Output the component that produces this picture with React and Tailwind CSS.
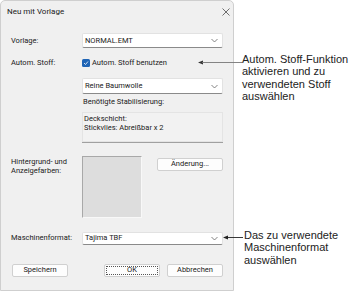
import React from "react";

const Chevron = () => (
  <svg width="7" height="5" viewBox="0 0 7 5" className="shrink-0">
    <path d="M0.5 1 L3.5 4 L6.5 1" fill="none" stroke="#666" strokeWidth="0.8" />
  </svg>
);

const Select = ({ text, h = "h-[15px]" }) => (
  <div className={`flex ${h} w-[141px] items-center justify-between rounded-[2px] border border-[#e2e2e2] border-b-[#8a8a8a] bg-white pl-[2px] pr-[4px]`}>
    <span>{text}</span>
    <Chevron />
  </div>
);

const Btn = ({ children, className = "" }) => (
  <div className={`flex h-[13px] w-[56px] items-center justify-center rounded-[2px] border border-[#d0d0d0] bg-[#fdfdfd] ${className}`}>
    {children}
  </div>
);

export default function App() {
  return (
    <div className="relative flex h-[294px] w-[355px] bg-white" style={{ fontFamily: "Roboto, 'Noto Sans', sans-serif" }}>
      <div className="flex h-[291px] w-[234px] flex-col rounded-t-[5px] border border-[#cfcfcf] bg-[#f0f0f0] text-[7.5px] leading-none text-[#1a1a1a]">
        <div className="flex h-[22px] items-center justify-between pl-[6px] pr-[3px] text-[8px]">
          <span>Neu mit Vorlage</span>
          <svg width="8" height="8" viewBox="0 0 8 8">
            <path d="M0.5 0.5 L7.5 7.5 M7.5 0.5 L0.5 7.5" stroke="#333" strokeWidth="0.7" />
          </svg>
        </div>
        <div className="flex flex-col pl-[10px]">
          <div className="mt-[10px] flex items-center">
            <span className="w-[71px]">Vorlage:</span>
            <Select text="NORMAL.EMT" />
          </div>
          <div className="mt-[10px] flex h-[10px] items-center">
            <span className="w-[71px]">Autom. Stoff:</span>
            <div className="flex items-center gap-[2px]">
              <div className="flex h-[8px] w-[8px] items-center justify-center rounded-[1.5px] bg-[#1f64b5]">
                <svg width="6" height="6" viewBox="0 0 6 6">
                  <path d="M1 3 L2.5 4.5 L5 1.5" fill="none" stroke="white" strokeWidth="0.8" />
                </svg>
              </div>
              <span>Autom. Stoff benutzen</span>
            </div>
          </div>
          <div className="ml-[71px] mt-[10px]">
            <Select text="Reine Baumwolle" h="h-[16px]" />
          </div>
          <div className="ml-[72px] mt-[4px]">Benötigte Stabilisierung:</div>
          <div className="ml-[71px] mt-[6px] flex h-[31px] w-[141px] flex-col gap-[2px] border-b border-[#a0a0a0] bg-[#f2f2f2] pl-[2px] pt-[3px] shadow-[inset_0_0_0_1px_#e4e4e4]">
            <span>Deckschicht:</span>
            <span>Stickvlies: Abreißbar x 2</span>
          </div>
          <div className="mt-[13px] flex">
            <div className="flex w-[71px] flex-col gap-[2px] pt-[2px]">
              <span>Hintergrund- und</span>
              <span>Anzeigefarben:</span>
            </div>
            <div className="h-[62px] w-[60px] border border-[#a8a8a8] border-b-[#f8f8f8] border-r-[#f8f8f8] bg-[#dddddd]"></div>
            <div className="ml-[15px] mt-[2px] flex h-[13px] w-[66px] items-center justify-center rounded-[2px] border border-[#d0d0d0] bg-[#fdfdfd]">
              Änderung...
            </div>
          </div>
          <div className="mt-[14px] flex items-center">
            <span className="w-[71px]">Maschinenformat:</span>
            <Select text="Tajima TBF" h="h-[13px]" />
          </div>
          <div className="mt-[19px] flex items-center">
            <Btn className="ml-[1px]">Speichern</Btn>
            <Btn className="ml-[36px] border-[#2a2a2a] outline-dotted outline-1 outline-offset-[-3px] outline-[#555]">OK</Btn>
            <Btn className="ml-[7px]">Abbrechen</Btn>
          </div>
        </div>
      </div>

      <div className="pointer-events-none absolute left-[198px] top-[60px] flex items-center">
        <svg width="44" height="5" viewBox="0 0 44 5">
          <path d="M0 2.5 L5 0.5 L5 4.5 Z" fill="#333" />
          <path d="M4 2.5 L44 2.5" stroke="#777" strokeWidth="0.9" />
        </svg>
      </div>
      <div className="pointer-events-none absolute left-[223px] top-[235px] flex items-center">
        <svg width="20" height="5" viewBox="0 0 20 5">
          <path d="M0 2.5 L5 0.5 L5 4.5 Z" fill="#222" />
          <path d="M4 2.5 L20 2.5" stroke="#222" strokeWidth="0.9" />
        </svg>
      </div>

      <div className="absolute left-[242px] top-[53px] text-[11px] leading-[12.3px] text-[#222]" style={{ fontFamily: "'Liberation Sans', Arial, sans-serif" }}>
        Autom. Stoff-Funktion<br />aktivieren und zu<br />verwendeten Stoff<br />auswählen
      </div>
      <div className="absolute left-[244px] top-[229px] text-[11px] leading-[12.3px] text-[#222]" style={{ fontFamily: "'Liberation Sans', Arial, sans-serif" }}>
        Das zu verwendete<br />Maschinenformat<br />auswählen
      </div>
    </div>
  );
}
